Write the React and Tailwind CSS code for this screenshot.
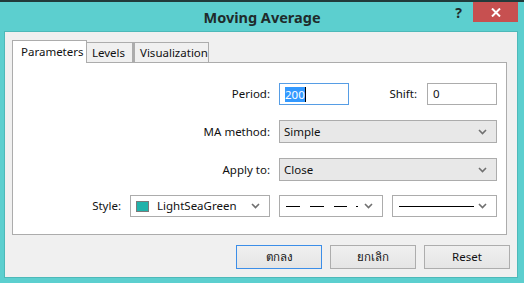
const font = { fontFamily: '"Noto Sans", "Liberation Sans", sans-serif' };

const Chevron = () => (
  <svg width="9" height="6" viewBox="0 0 9 6" className="shrink-0">
    <path d="M1 1 L4.5 4.5 L8 1" fill="none" stroke="#707070" strokeWidth="1.6" />
  </svg>
);

const Select = ({ className, children }) => (
  <div className={`flex items-center justify-between border border-[#acacac] pl-[4px] pr-[9px] ${className}`}>
    <div className="flex items-center">{children}</div>
    <Chevron />
  </div>
);

const Label = ({ children }) => <span className="text-[11.5px] text-[#111] mr-[9px]">{children}</span>;

const Button = ({ children, primary }) => (
  <button
    className={`w-[86px] h-[24px] text-[11.5px] text-[#111] bg-gradient-to-b from-[#f0f0f0] to-[#e5e5e5] border ${
      primary ? "border-[#3c8ee8]" : "border-[#adadad]"
    }`}
  >
    {children}
  </button>
);

export default function App() {
  return (
    <div className="w-[524px] h-[283px] bg-[#5ccfcf] flex flex-col overflow-hidden" style={font}>
      {/* top edge of the window behind */}
      <div className="h-[2px] bg-[#223b3b] shrink-0" />

      {/* title bar */}
      <div className="h-[29px] grid grid-cols-[1fr_auto_1fr] items-start shrink-0">
        <div />
        <div className="text-[14.5px] font-bold text-[#1f2b2b] pt-[5px] leading-[20px]">Moving Average</div>
        <div className="flex justify-end items-start pr-[6px]">
          <span className="text-[14px] font-bold text-[#1f2b2b] leading-[20px] mr-[11px] pt-[1px]">?</span>
          <div className="w-[45px] h-[20px] bg-[#c75050] flex items-center justify-center">
            <svg width="10" height="9" viewBox="0 0 10 9">
              <path d="M1 0.5 L9 8.5 M9 0.5 L1 8.5" stroke="#fff" strokeWidth="2" />
            </svg>
          </div>
        </div>
      </div>

      {/* client area */}
      <div className="ml-[4px] mr-[6px] mb-[5px] flex-1 border border-[#4db9b9] bg-[#f0f0f0] flex flex-col pl-[7px] pr-[10px] pt-[8px]">
        {/* tabs */}
        <div className="flex items-end h-[22px] text-[11.5px] text-[#111]">
          <div className="w-[75px] h-[23px] border border-b-0 border-[#acacac] bg-white relative z-10 -mb-[1px] pl-[8px] pt-[3px] leading-[16px]">
            Parameters
          </div>
          <div className="w-[46px] h-[20px] border border-l-0 border-b-0 border-[#acacac] bg-[#f0f0f0] pl-[5px] pt-[2px] leading-[16px]">
            Levels
          </div>
          <div className="w-[76px] h-[20px] border border-l-[2px] border-b-0 border-[#acacac] bg-[#f0f0f0] pl-[5px] pt-[2px] leading-[16px]">
            Visualization
          </div>
        </div>

        {/* panel */}
        <div className="h-[173px] border border-[#acacac] bg-white pt-[20px] pr-[9px] flex flex-col items-end">
          <div className="flex items-center h-[22px]">
            <Label>Period:</Label>
            <div className="w-[70px] h-[22px] border border-[#569de5] flex items-center pl-[5px]">
              <span className="bg-[#3399ff] text-white text-[11.5px] leading-[15px]">200</span>
              <span className="w-[1px] h-[15px] bg-black" />
            </div>
            <span className="w-[78px] text-right pr-[10px] text-[11.5px] text-[#111]">Shift:</span>
            <div className="w-[70px] h-[22px] border border-[#acacac] flex items-center pl-[5px] text-[11.5px] text-[#111]">0</div>
          </div>

          <div className="flex items-center h-[23px] mt-[15px]">
            <Label>MA method:</Label>
            <Select className="w-[218px] h-[23px] bg-[#e8e8e8] text-[11.5px] text-[#111]">Simple</Select>
          </div>

          <div className="flex items-center h-[23px] mt-[15px]">
            <Label>Apply to:</Label>
            <Select className="w-[218px] h-[23px] bg-[#e8e8e8] text-[11.5px] text-[#111]">Close</Select>
          </div>

          <div className="flex items-center h-[22px] mt-[14px]">
            <Label>Style:</Label>
            <Select className="w-[140px] h-[22px] bg-white text-[11.5px] text-[#111]">
              <span className="w-[13px] h-[11px] bg-[#20b2aa] border border-[#7a7a7a] ml-[1px] mr-[8px]" />
              LightSeaGreen
            </Select>
            <Select className="w-[104px] h-[22px] bg-white ml-[9px] pl-[6px]">
              <svg width="76" height="3" viewBox="0 0 76 3">
                <path d="M0 1.5 H14 M24 1.5 H38 M48 1.5 H61 M70 1.5 H72" stroke="#000" strokeWidth="1" />
              </svg>
            </Select>
            <Select className="w-[105px] h-[22px] bg-white ml-[9px] pl-[6px]">
              <svg width="75" height="3" viewBox="0 0 75 3">
                <path d="M0 1.5 H75" stroke="#000" strokeWidth="1" />
              </svg>
            </Select>
          </div>
        </div>

        {/* buttons */}
        <div className="flex justify-end gap-[8px] mt-[10px] -mr-[3px]">
          <Button primary>ตกลง</Button>
          <Button>ยกเลิก</Button>
          <Button>Reset</Button>
        </div>
      </div>
    </div>
  );
}
